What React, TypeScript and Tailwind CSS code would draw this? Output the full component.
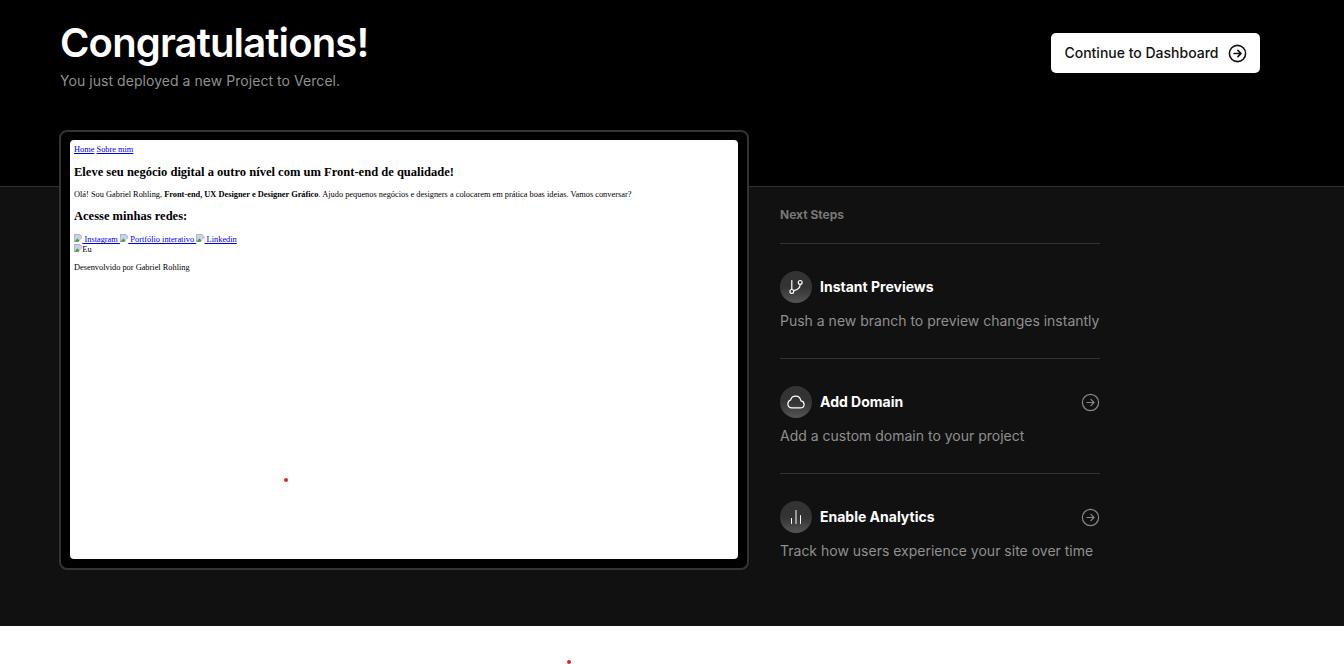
import React from 'react';

const ArrowCircle = ({ className, weight = 1.5 }: { className: string; weight?: number }) => (
  <svg viewBox="0 0 24 24" fill="none" stroke="currentColor" strokeWidth={weight} strokeLinecap="round" strokeLinejoin="round" className={className}>
    <circle cx="12" cy="12" r="10.25" />
    <path d="M7.5 12h8.500M12.500 8l4 4-4 4" />
  </svg>
);

const BranchIcon = () => (
  <svg viewBox="0 0 16 16" fill="none" stroke="currentColor" strokeWidth="1.2" strokeLinecap="round" className="w-4 h-4">
    <path d="M3.800 1.500v8.800" />
    <circle cx="3.800" cy="12.400" r="1.900" />
    <circle cx="12.200" cy="3.400" r="1.900" />
    <path d="M12.200 5.300c0 3.600-2.800 5.600-6.400 6.400" />
  </svg>
);

const CloudIcon = () => (
  <svg viewBox="0 0 18 14" fill="none" stroke="currentColor" strokeWidth="1.2" className="w-[18px] h-[14px]">
    <path d="M5 12.900h8.200c2 0 3.900-1.300 3.900-3.500 0-2-1.400-3.300-3.100-3.500C13.400 3 11.400 1.100 8.700 1.100 6 1.100 4.200 2.600 3.600 5 1.900 5.500.9 6.900.9 8.800.9 11.300 2.700 12.900 5 12.900z" />
  </svg>
);

const BarsIcon = () => (
  <svg viewBox="0 0 16 16" fill="none" stroke="currentColor" strokeWidth="1" strokeLinecap="round" className="w-4 h-4">
    <path d="M3.500 9.500v5M8 1.500v13M12.500 6.500v8" />
  </svg>
);

// chrome's broken image placeholder
const BrokenImg = () => (
  <svg viewBox="0 0 8 8" className="inline-block w-[8.36px] h-[8.36px] align-baseline">
    <path d="M.3.300h5.200l2.200 2.200v5.200H.3z" fill="#c3d4ec" stroke="#8f8f8f" strokeWidth=".6" />
    <path d="M.6 7.400 3.200 4l2.800 3.400z" fill="#4f9a4f" />
    <path d="M4 8 8 3.600V8z" fill="#fff" />
  </svg>
);

const steps = [
  { title: 'Instant Previews', text: 'Push a new branch to preview changes instantly', icon: <BranchIcon />, arrow: false },
  { title: 'Add Domain', text: 'Add a custom domain to your project', icon: <CloudIcon />, arrow: true },
  { title: 'Enable Analytics', text: 'Track how users experience your site over time', icon: <BarsIcon />, arrow: true },
];

const PreviewPage = () => (
  <div className="h-full bg-white rounded-[4px] px-1 pt-[5px] text-[8.36px] text-black font-['Liberation_Serif',serif] leading-[9.5px]">
    <div className="text-[#0000ee]">
      <a className="underline">Home</a> <a className="underline">Sobre mim</a>
    </div>
    <h2 className="text-[12.54px] leading-[14px] font-bold mt-[10px] mb-[11px]">Eleve seu negócio digital a outro nível com um Front-end de qualidade!</h2>
    <p>
      Olá! Sou Gabriel Rohling, <b>Front-end, UX Designer e Designer Gráfico</b>. Ajudo pequenos negócios e designers a colocarem em prática boas ideias. Vamos conversar?
    </p>
    <h2 className="text-[12.54px] leading-[14px] font-bold mt-[10px] mb-[11px]">Acesse minhas redes:</h2>
    <div className="text-[#0000ee]">
      <a className="underline"><BrokenImg /> Instagram </a> <a className="underline"><BrokenImg /> Portfólio interativo </a> <a className="underline"><BrokenImg /> Linkedin</a>
    </div>
    <div className="-mt-px">
      <BrokenImg />Eu
    </div>
    <p className="mt-2">Desenvolvido por Gabriel Rohling</p>
  </div>
);

export default function App() {
  return (
    <div className="relative h-[664px] overflow-hidden bg-white font-['Inter',sans-serif]">
      <header className="h-[186px] bg-black px-[60px] flex items-start justify-between">
        <div className="pt-[19px]">
          <h1 className="text-[40px] leading-[48px] font-semibold tracking-[-0.85px] text-white">Congratulations!</h1>
          <p className="text-sm leading-6 tracking-[0.05px] text-[#8f8f8f] mt-0.5">You just deployed a new Project to Vercel.</p>
        </div>
        <button className="mt-[33px] mr-6 w-[209px] h-10 rounded-[5px] bg-white text-[#111] text-sm font-medium flex items-center justify-center gap-[9px]">
          Continue to Dashboard
          <ArrowCircle className="w-[19px] h-[19px]" weight={2} />
        </button>
      </header>

      <main className="h-[440px] bg-[#111] border-t border-[#333] pl-[59px] flex items-start">
        <div className="-mt-[57px] w-[690px] h-[440px] rounded-lg border-2 border-[#333] bg-black pt-2 pb-[9px] pl-[9px] pr-[9px]">
          <PreviewPage />
        </div>

        <section className="ml-[31px] w-80 pt-5">
          <h3 className="text-xs leading-4 font-bold text-[#777] pb-5 border-b border-[#333]">Next Steps</h3>
          {steps.map((step, i) => (
            <div key={step.title} className={i < 2 ? 'pt-[27px] pb-[25px] border-b border-[#333]' : 'pt-[27px]'}>
              <div className="flex items-center h-8">
                <div className="w-8 h-8 rounded-full bg-gradient-to-b from-[#333] via-[#333] to-[#555] text-white flex items-center justify-center">
                  {step.icon}
                </div>
                <span className="ml-2 flex-1 text-sm font-bold text-white">{step.title}</span>
                {step.arrow && <ArrowCircle className="w-[19px] h-[19px] text-[#888]" />}
              </div>
              <p className="mt-1.5 text-sm leading-6 text-[#8f8f8f]">{step.text}</p>
            </div>
          ))}
        </section>
      </main>

      <span className="absolute left-[284px] top-[478px] w-1 h-1 rounded-full bg-[#e5202e]" />
      <span className="absolute left-[567px] top-[660px] w-1 h-1 rounded-full bg-[#e5202e]" />
    </div>
  );
}
